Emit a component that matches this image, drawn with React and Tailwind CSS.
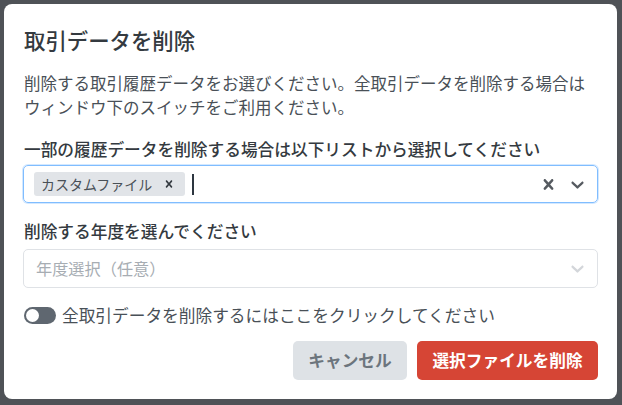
import React from "react";

function ChevronDown({ className }) {
  return (
    <svg viewBox="0 0 20 20" className={className} fill="currentColor">
      <path d="M4.516 7.548c0.436-0.446 1.043-0.481 1.576 0l3.908 3.747 3.908-3.747c0.533-0.481 1.141-0.446 1.574 0 0.436 0.445 0.408 1.197 0 1.615-0.406 0.418-4.695 4.502-4.695 4.502-0.217 0.223-0.502 0.335-0.787 0.335s-0.57-0.112-0.789-0.335c0 0-4.287-4.084-4.695-4.502s-0.436-1.17 0-1.615z" />
    </svg>
  );
}

function Cross({ className }) {
  return (
    <svg viewBox="0 0 20 20" className={className} fill="currentColor">
      <path d="M14.348 14.849c-0.469 0.469-1.229 0.469-1.697 0l-2.651-3.030-2.651 3.029c-0.469 0.469-1.229 0.469-1.697 0-0.469-0.469-0.469-1.229 0-1.697l2.758-3.15-2.759-3.152c-0.469-0.469-0.469-1.228 0-1.697s1.228-0.469 1.697 0l2.652 3.031 2.651-3.031c0.469-0.469 1.228-0.469 1.697 0s0.469 1.229 0 1.697l-2.758 3.152 2.758 3.15c0.469 0.469 0.469 1.229 0 1.698z" />
    </svg>
  );
}

export default function App() {
  return (
    <div
      className="w-[622px] h-[405px] bg-[#4f5257] pt-[4px] pl-[4px] overflow-hidden"
      style={{ fontFamily: '"Noto Sans CJK JP", "Noto Sans", sans-serif' }}
    >
      <div className="w-[613px] h-[395px] bg-white rounded-[8px] pl-[20px] pr-[19px] pt-[22px] flex flex-col">
        <h1 className="text-[21.4px] leading-[28px] text-[#343a40] font-medium">取引データを削除</h1>
        <p className="mt-[17px] text-[16.5px] leading-[24px] text-[#495057]">
          削除する取引履歴データをお選びください。全取引データを削除する場合は
          <br />
          ウィンドウ下のスイッチをご利用ください。
        </p>
        <div className="mt-[19px] text-[16.7px] leading-[22px] text-[#343a40] font-medium">
          一部の履歴データを削除する場合は以下リストから選択してください
        </div>
        <div className="mt-[5px] w-[575px] -ml-[1px] h-[38px] rounded-[5px] border border-[#80bdff] shadow-[0_0_0_1px_rgba(128,189,255,0.35)] flex items-center pl-[10px] pr-[9px]">
          <div className="h-[24px] rounded-[3px] bg-[#e1e4e8] flex items-center pl-[7px] pr-[9px]">
            <span className="text-[14px] text-[#495057]">カスタムファイル</span>
            <Cross className="w-[14px] h-[14px] ml-[10px] text-[#343a40]" />
          </div>
          <div className="ml-[7px] w-[2px] h-[21px] bg-[#2d3640]" />
          <div className="flex-1" />
          <Cross className="w-[21px] h-[21px] text-[#555a60]" />
          <div className="ml-[8px]" />
          <ChevronDown className="w-[21px] h-[21px] text-[#555a60]" />
        </div>
        <div className="mt-[17px] text-[16.7px] leading-[22px] text-[#343a40] font-medium">
          削除する年度を選んでください
        </div>
        <div className="mt-[7px] w-[575px] -ml-[1px] h-[39px] rounded-[5px] border border-[#dfe2e6] flex items-center pl-[12px] pr-[9px]">
          <span className="text-[16.2px] text-[#a7adb3]">年度選択（任意）</span>
          <div className="flex-1" />
          <ChevronDown className="w-[21px] h-[21px] text-[#d3d6da]" />
        </div>
        <div className="mt-[16px] flex items-center">
          <div className="w-[32px] h-[17px] rounded-full bg-[#5f6770] flex items-center pl-[2px]">
            <div className="w-[13px] h-[13px] rounded-full bg-white" />
          </div>
          <span className="ml-[6px] text-[16.7px] leading-[22px] text-[#495057]">
            全取引データを削除するにはここをクリックしてください
          </span>
        </div>
        <div className="mt-[15px] flex justify-end gap-[10px]">
          <button className="w-[114px] h-[39px] rounded-[5px] bg-[#dee2e6] text-[#6c757d] text-[16.7px] font-bold">
            キャンセル
          </button>
          <button className="w-[181px] h-[39px] rounded-[5px] bg-[#d64535] text-white text-[16.7px] font-bold">
            選択ファイルを削除
          </button>
        </div>
      </div>
    </div>
  );
}
